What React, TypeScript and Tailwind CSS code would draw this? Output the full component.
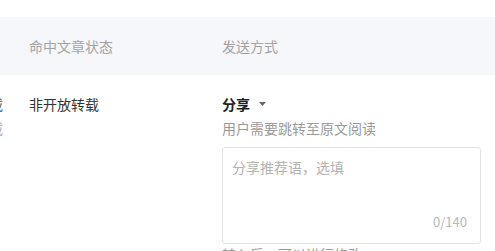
import React from 'react';

const App: React.FC = () => {
  return (
    <div
      className="w-[495px] h-[251px] overflow-hidden bg-white text-[14px]"
      style={{ fontFamily: '"Noto Sans CJK SC", "Liberation Sans", sans-serif' }}
    >
      {/* header band */}
      <div className="mt-[17px] h-[58px] bg-[#f6f7fa] flex items-center text-[#a3a3a3]">
        <div className="w-[222px] pl-[29px]">命中文章状态</div>
        <div>发送方式</div>
      </div>

      {/* row */}
      <div className="flex pt-[17px]">
        <div className="w-[3px] overflow-hidden flex flex-col items-end text-[#555]">
          <div className="whitespace-nowrap h-[24px] leading-[24px]">载</div>
          <div className="whitespace-nowrap h-[24px] leading-[24px] text-[#aaa]">载</div>
        </div>
        <div className="w-[219px] pl-[26px] leading-[24px] text-[#333]">非开放转载</div>
        <div className="flex flex-col">
          <div className="flex items-center gap-[9px] leading-[24px] font-bold text-[#222]">
            分享
            <svg width="7" height="4" viewBox="0 0 7 4">
              <path d="M0 0h7L3.5 4z" fill="#666" />
            </svg>
          </div>
          <div className="leading-[24px] text-[#9a9a9a]">用户需要跳转至原文阅读</div>
          <div className="mt-[7px] w-[259px] h-[97px] border border-[#e3e3e3] rounded-[3px] relative">
            <div className="pl-[9px] pt-[9px] text-[#b3b3b3]">分享推荐语，选填</div>
            <div className="absolute right-[13px] bottom-[12px] text-[#b8b8b8] text-[13px]">0/140</div>
          </div>
          <div className="leading-[20px] text-[#9a9a9a] whitespace-nowrap">转入后，可以进行修改</div>
        </div>
      </div>
    </div>
  );
};

export default App;
